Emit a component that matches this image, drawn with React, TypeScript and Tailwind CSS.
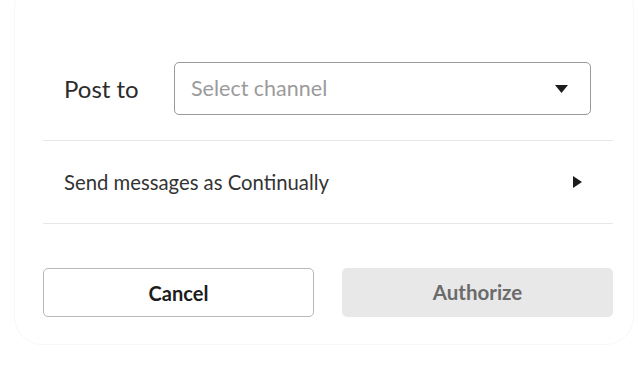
import React from 'react';

export default function App() {
  return (
    <div className="w-[638px] h-[386px] bg-white overflow-hidden" style={{ fontFamily: 'Lato, "Open Sans", sans-serif' }}>
      <div className="ml-[14px] mt-[-20px] h-[365px] w-[620px] rounded-[28px] border border-[#f8f8f8] pl-[28px] pr-[20px] pt-[81px]">
        {/* Post to row */}
        <div className="flex items-center pl-[21px] pr-[22px]">
          <span className="w-[110px] text-[24px] text-[#2b2b2b]">Post to</span>
          <div className="flex h-[53px] flex-1 items-center justify-between rounded-[5px] border border-[#9a9a9a] pl-[16px] pr-[22px]">
            <span className="text-[21.5px] text-[#9b9b9b]">Select channel</span>
            <svg width="13" height="8" viewBox="0 0 13 8">
              <path d="M0 0 L13 0 L6.5 8 Z" fill="#1d1d1d" />
            </svg>
          </div>
        </div>

        <div className="mt-[25px] border-t border-[#e8e8e8]" />

        {/* Send as row */}
        <div className="flex h-[82px] items-center justify-between pl-[21px] pr-[31px]">
          <span className="text-[20.3px] text-[#333]">Send messages as Continually</span>
          <svg width="9" height="12" viewBox="0 0 9 12">
            <path d="M0 0 L9 6 L0 12 Z" fill="#1d1d1d" />
          </svg>
        </div>

        <div className="border-t border-[#e8e8e8]" />

        {/* Buttons */}
        <div className="mt-[44px] flex gap-[28px]">
          <button className="flex h-[49px] w-[271px] items-center justify-center rounded-[5px] border border-[#b8b8b8] bg-white text-[20px] font-bold text-[#1d1d1d]">
            Cancel
          </button>
          <button className="flex h-[49px] flex-1 items-center justify-center rounded-[5px] bg-[#e8e8e8] text-[20.5px] font-bold text-[#6b6b6b]">
            Authorize
          </button>
        </div>
      </div>
    </div>
  );
}
